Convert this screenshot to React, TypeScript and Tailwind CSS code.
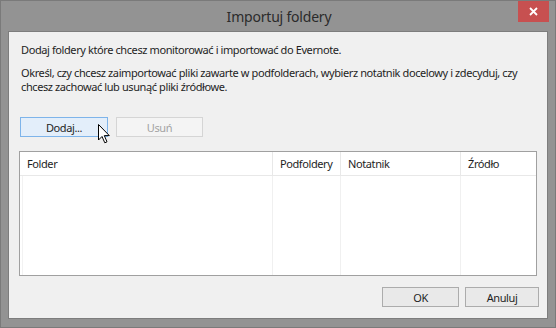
export default function App() {
  const cols = [
    { label: 'Folder', w: 'w-[253px]' },
    { label: 'Podfoldery', w: 'w-[68px]' },
    { label: 'Notatnik', w: 'w-[120px]' },
    { label: 'Źródło', w: 'flex-1' },
  ];

  return (
    <div
      className="relative w-[556px] h-[328px] bg-[#939393] border border-[#7a7a7a] flex flex-col text-[#1e1e1e]"
      style={{ fontFamily: '"Noto Sans", "Open Sans", sans-serif' }}
    >
      {/* title bar */}
      <div className="h-[30px] flex items-center justify-center">
        <span className="text-[14px] text-[#2b2b2b] ml-[2px] tracking-[-0.2px]">Importuj foldery</span>
      </div>
      <div className="absolute top-0 right-[6px] w-[31px] h-[21px] bg-[#c75050] flex items-center justify-center">
        <svg width="9" height="9" viewBox="0 0 9 9">
          <path d="M1 1 L8 8 M8 1 L1 8" stroke="#fff" strokeWidth="1.8" />
        </svg>
      </div>

      {/* client area */}
      <div className="mx-[7px] mb-[8px] flex-1 bg-[#f0f0f0] border border-[#7d7d7d] px-[10px] pt-[10px] flex flex-col text-[11px] tracking-[-0.4px]">
        <p className="ml-[2px] leading-[15px]">
          Dodaj foldery które chcesz monitorować i importować do Evernote.
        </p>
        <p className="ml-[2px] mt-[9px] leading-[14px] max-w-[508px]">
          Określ, czy chcesz zaimportować pliki zawarte w podfolderach, wybierz notatnik docelowy i zdecyduj, czy chcesz
          zachować lub usunąć pliki źródłowe.
        </p>

        <div className="relative mt-[23px] ml-[1px] flex gap-[8px]">
          <button className="w-[88px] h-[20px] border border-[#7eb4ea] bg-[#e3eefa] leading-none">
            Dodaj...
          </button>
          <button className="w-[87px] h-[20px] border border-[#d5d5d5] bg-[#f4f4f4] text-[#a3a3a3] leading-none">
            Usuń
          </button>
          <svg className="absolute left-[78px] top-[7px]" width="13" height="20" viewBox="0 0 13 20">
            <path
              d="M0.5 0.5 L0.5 16 L4 12.5 L6.8 18.8 L9 17.8 L6.3 11.6 L11.3 11.6 Z"
              fill="#fff"
              stroke="#000"
              strokeWidth="1"
              strokeLinejoin="miter"
            />
          </svg>
        </div>

        <div className="mt-[14px] h-[125px] border border-[#a0a0a0] bg-white flex flex-col">
          <div className="h-[24px] flex border-b border-[#e8e8e8]">
            {cols.map((c, i) => (
              <div
                key={c.label}
                className={`${c.w} flex items-center pl-[7px] pt-[2px] ${i < cols.length - 1 ? 'border-r border-[#e8e8e8]' : ''}`}
              >
                {c.label}
              </div>
            ))}
          </div>
          <div className="flex-1 flex">
            <div className="w-[253px] border-r border-[#f0f0f0] pl-[2px]">
              <div className="h-full border-l border-[#f2f2f2]" />
            </div>
            <div className="w-[68px] border-r border-[#f0f0f0]" />
            <div className="w-[120px] border-r border-[#f0f0f0]" />
            <div className="flex-1" />
          </div>
        </div>

        <div className="mt-[11px] flex justify-end gap-[6px] mr-[-2px]">
          <button className="w-[77px] h-[20px] border border-[#acacac] bg-[#e9e9e9] leading-none">OK</button>
          <button className="w-[74px] h-[20px] border border-[#acacac] bg-[#e9e9e9] leading-none">
            Anuluj
          </button>
        </div>
      </div>
    </div>
  );
}
